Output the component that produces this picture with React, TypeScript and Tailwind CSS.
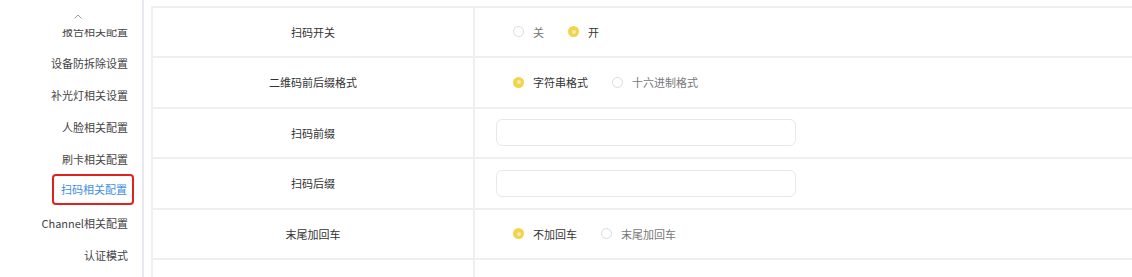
import React from 'react';

const FONT = { fontFamily: '"Noto Sans CJK SC", "Noto Sans", sans-serif' };

const menu = [
  '报告相关配置',
  '设备防拆除设置',
  '补光灯相关设置',
  '人脸相关配置',
  '刷卡相关配置',
  '扫码相关配置',
  'Channel相关配置',
  '认证模式',
];

function Radio({ checked, label }: { checked: boolean; label: string }) {
  return (
    <div className="flex items-center mr-[24px]">
      {checked ? (
        <span className="w-[11px] h-[11px] rounded-full bg-[#f2d44c] flex items-center justify-center">
          <span className="w-[4px] h-[4px] rounded-full bg-[#fbeea6]" />
        </span>
      ) : (
        <span className="w-[11px] h-[11px] rounded-full border border-[#dcdcdc] bg-white" />
      )}
      <span className={`ml-[9px] ${checked ? 'text-[#333]' : 'text-[#777]'}`}>{label}</span>
    </div>
  );
}

function Row({ label, children, radio }: { label: string; children?: React.ReactNode; radio?: boolean }) {
  return (
    <div className="flex h-[50.5px] border-t-2 border-[#efefef]">
      <div className="w-[322px] flex items-center justify-center text-[#333] border-r-2 border-[#efefef]">
        {label}
      </div>
      <div className={`flex-1 flex items-center ${radio ? 'pl-[38px]' : 'pl-[21px]'}`}>{children}</div>
    </div>
  );
}

export default function App() {
  return (
    <div className="flex w-[1132px] h-[277px] bg-white overflow-hidden text-[11px]" style={FONT}>
      <div className="w-[144px] shrink-0 border-r-2 border-[#e6e9ef] flex flex-col relative">
        <div className="h-[29px] flex justify-center items-start pt-[14px] pl-[14px] bg-white relative z-10">
          <svg width="8" height="5" viewBox="0 0 8 5">
            <path d="M0.5 4.5 L4 1 L7.5 4.5" fill="none" stroke="#999" strokeWidth="1" />
          </svg>
        </div>
        <div className="flex-1 overflow-hidden">
          <div className="-mt-[13.5px]">
            {menu.map((m) => {
              const active = m === '扫码相关配置';
              return (
                <div key={m} className="h-[32px] flex items-center justify-end pr-[14px] relative">
                  {active ? (
                    <>
                      <span className="relative -top-[2px] border-2 border-[#e0221e] rounded-[4px] pl-[7px] pr-[5px] py-[5px] -mr-[6px] text-[#3f8ee0]">
                        {m}
                      </span>
                      <span className="absolute right-[-2px] top-0 w-[2px] h-[33px] bg-[#4a90e2]" />
                    </>
                  ) : (
                    <span className="text-[#444]">{m}</span>
                  )}
                </div>
              );
            })}
          </div>
        </div>
      </div>
      <div className="flex-1 ml-[7px] pt-[5.5px]">
        <div className="border-l-2 border-[#efefef]">
          <Row label="扫码开关" radio>
            <Radio checked={false} label="关" />
            <Radio checked label="开" />
          </Row>
          <Row label="二维码前后缀格式" radio>
            <Radio checked label="字符串格式" />
            <Radio checked={false} label="十六进制格式" />
          </Row>
          <Row label="扫码前缀">
            <input className="w-[300px] h-[27px] border border-[#e8e8e8] rounded-[6px] outline-none" />
          </Row>
          <Row label="扫码后缀">
            <input className="w-[300px] h-[27px] border border-[#e8e8e8] rounded-[6px] outline-none" />
          </Row>
          <Row label="末尾加回车" radio>
            <Radio checked label="不加回车" />
            <Radio checked={false} label="末尾加回车" />
          </Row>
          <Row label="" />
        </div>
      </div>
    </div>
  );
}
